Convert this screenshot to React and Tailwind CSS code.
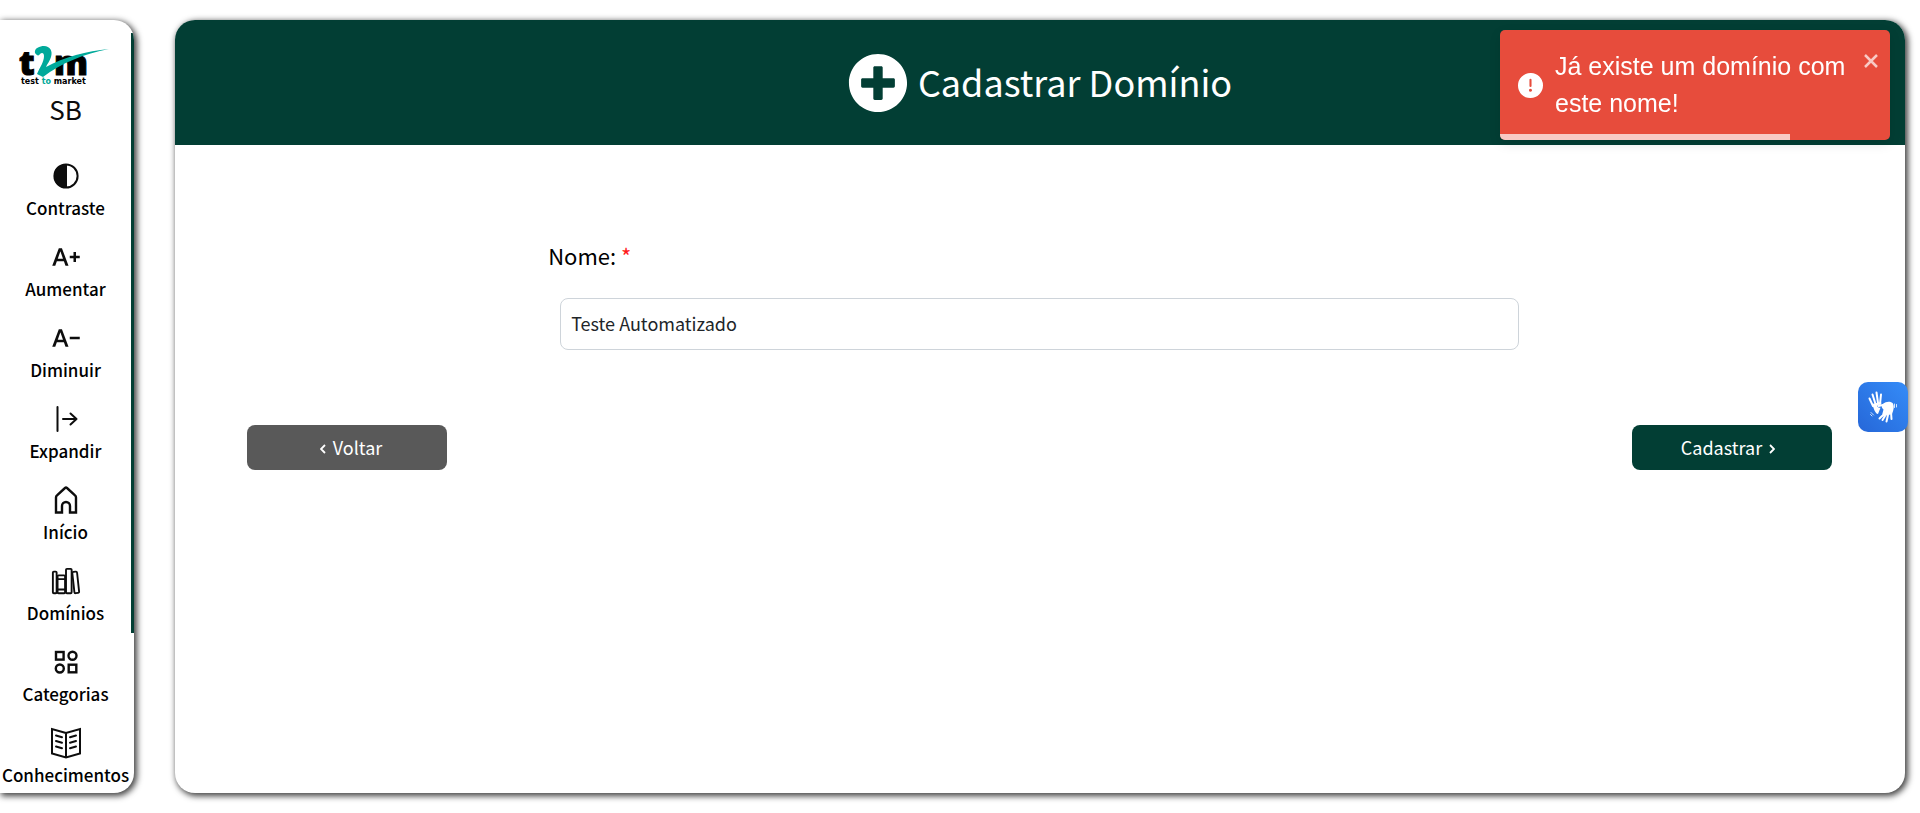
import React from "react";
import { FaPlusCircle } from "react-icons/fa";
import { MdTextIncrease, MdTextDecrease } from "react-icons/md";
import { IoLibraryOutline } from "react-icons/io5";

function Logo() {
  return (
    <svg viewBox="0 0 98 50" className="h-[50px] w-[98px] shrink-0" role="img" aria-label="t2m test to market">
      <g fontFamily="Open Sans, sans-serif" fontWeight="800" stroke="#000" strokeWidth="1">
        <text x="2" y="37" fontSize="34">t</text>
        <text x="37" y="37" fontSize="34">m</text>
      </g>
      <path
        d="M18 15 C17 10 23 8 27 8 C33 8 36 13 34 19 C33 23 30 26 29 29 C47 19 70 13 92 11 C67 16 44 25 26 39 L20 36 C23 29 27 24 27 18 C27 15 25 14 23 16 C22 18 20 18 18 15 Z"
        fill="#00a99a"
      />
      <text x="4" y="46" fontFamily="DejaVu Sans, sans-serif" fontWeight="700" fontSize="8">
        test <tspan fill="#00a99a">to</tspan> market
      </text>
    </svg>
  );
}

const line = { fill: "none", stroke: "currentColor", strokeLinecap: "round", strokeLinejoin: "round" };

function ContrastIcon() {
  return (
    <svg viewBox="0 0 28 28" className="size-7" aria-hidden="true">
      <circle cx="14" cy="14" r="11.6" fill="none" stroke="currentColor" strokeWidth="2" />
      <path d="M15 2v24h-1a12 12 0 0 1 0-24z" fill="currentColor" />
    </svg>
  );
}

function ExpandIcon() {
  return (
    <svg viewBox="0 0 28 28" className="size-7" aria-hidden="true" {...line} strokeWidth="2">
      <path d="M5.500 2v24" />
      <path d="M11 14h13.500M18.500 8.500l6 5.500-6 5.500" />
    </svg>
  );
}

function HomeIcon() {
  return (
    <svg viewBox="0 0 28 28" className="size-7" aria-hidden="true" {...line} strokeLinecap="butt" strokeLinejoin="miter" strokeWidth="2.400">
      <path d="M4 26.500V11.500C4 10.500 4.300 10 5 9.400L13 2c.6-.5 1.400-.5 2 0l8 7.400c.7.600 1 1.100 1 2.100V26.500h-6v-6.500a4 4 0 0 0-8 0v6.500z" />
    </svg>
  );
}

function CategoryIcon() {
  return (
    <svg viewBox="0 0 28 28" className="size-7" aria-hidden="true" fill="none" stroke="currentColor" strokeWidth="2.400">
      <rect x="4" y="4" width="7.600" height="7.600" />
      <circle cx="20.500" cy="7.800" r="4" />
      <circle cx="7.800" cy="20.500" r="4" />
      <rect x="16.700" y="16.700" width="7.600" height="7.600" />
    </svg>
  );
}

function BookIcon() {
  return (
    <svg viewBox="0 0 32 32" className="size-8" aria-hidden="true" {...line} strokeWidth="2">
      <path strokeLinejoin="miter" d="M16 6L2 2v24.500l14 4 14-4V2zM16 6v24" />
      <path d="M6 8.500l6 1.700M6 14l6 1.700M6 19.500l6 1.700M26 8.500l-6 1.700M26 14l-6 1.700M26 19.500l-6 1.700" />
    </svg>
  );
}

function HandsIcon() {
  return (
    <svg viewBox="0 0 50 50" className="size-full" aria-hidden="true">
      <g fill="none" stroke="#fff" strokeLinecap="round">
        <path d="M15 24L11.500 16.500M17.500 22L14.500 12.500M20 21L18.500 10.500M22 22L23 12.500" strokeWidth="2" />
        <path d="M24 34L21.500 36.500M27 34L24.500 38M30 33L28.500 39.500M33 30L33.500 37M27 22.500L20.500 24" strokeWidth="2" />
        <path d="M36.500 22v3.500M38.500 22.500v2.500M13 30.500l2.500 2.500M12.500 32.500l1.500 1.500" strokeWidth=".8" />
      </g>
      <path d="M14 22l9-2 .5 1.500-4 2c-1 1.500 1 2.500 3 2.200l-2.500 6.300c-1.500-.2-2.500-1.500-3.500-3.500z" fill="#fff" />
      <path d="M25 22c3-3 8-3 10-.5 1.500 3 .5 7-1 10.500l-10.500 3 2-7.500c-2-1.500-2.500-3.500-.5-5.500z" fill="#fff" />
    </svg>
  );
}

function Chevron({ d }) {
  return (
    <svg viewBox="0 0 6 10" className="mt-1 h-[10px] w-[6px]" aria-hidden="true" {...line} strokeLinecap="butt" strokeLinejoin="miter" strokeWidth="1.8">
      <path d={d} />
    </svg>
  );
}

const items = [
  { label: "Contraste", icon: <ContrastIcon /> },
  { label: "Aumentar", icon: <MdTextIncrease className="size-[30px]" /> },
  { label: "Diminuir", icon: <MdTextDecrease className="size-[30px]" /> },
  { label: "Expandir", icon: <ExpandIcon /> },
  { label: "Início", icon: <HomeIcon /> },
  { label: "Domínios", icon: <IoLibraryOutline className="size-[30px]" /> },
  { label: "Categorias", icon: <CategoryIcon /> },
  { label: "Conhecimentos", icon: <BookIcon /> },
];

export default function App() {
  return (
    <div className="flex h-screen gap-[41px] bg-white py-5 pr-[15px] font-[family-name:'Noto_Sans_CJK_JP',sans-serif] text-[#0d0d0d]">
      <aside className="flex w-[134px] shrink-0 overflow-hidden rounded-r-[20px] bg-white shadow-[2px_2px_6px_1px_rgba(0,0,0,0.75)]">
        <div className="flex min-w-0 flex-1 flex-col items-center pt-[18px]">
          <Logo />
          <p className="mt-[3px] mb-[33px] text-[26px] leading-9">SB</p>
          <nav className="flex flex-col gap-3">
            {items.map(({ label, icon }) => (
              <a key={label} href="#" className="flex h-[69px] flex-col items-center">
                <span className="flex h-8 items-center">{icon}</span>
                <span className="mt-[2px] text-[17px] leading-7 font-medium whitespace-nowrap text-black">{label}</span>
              </a>
            ))}
          </nav>
        </div>
        <div className="w-[3px] pt-[13px]">
          <div className="h-[79%] bg-[#023e34]" />
        </div>
      </aside>

      <main className="min-w-0 flex-1 overflow-hidden rounded-[20px] bg-white shadow-[2px_2px_6px_1px_rgba(0,0,0,0.75)]">
        <header className="flex h-[125px] items-center justify-center gap-[10px] bg-[#023e34] text-white">
          <FaPlusCircle className="size-[60px]" />
          <h1 className="pb-1 text-[36px] leading-[54px]">Cadastrar Domínio</h1>
        </header>
        <form className="pt-[93px] pr-[73px] pl-[72px]" onSubmit={(e) => e.preventDefault()}>
          <div className="mx-auto w-[62%]">
            <label htmlFor="nome" className="block text-[22px] leading-[34px] text-black">
              Nome: <span className="text-[#ff1a1a]">*</span>
            </label>
            <div className="mt-[26px] px-3">
              <input
                id="nome"
                type="text"
                defaultValue="Teste Automatizado"
                className="h-[52px] w-full rounded-lg border border-[#ced4da] px-[10px] pb-[2px] text-[18px] text-[#212529] outline-none"
              />
            </div>
          </div>
          <div className="mt-[75px] flex justify-between">
            <button type="button" className="flex h-[45px] w-[200px] items-center justify-center gap-[7px] rounded-lg bg-[#595959] pb-px pl-2 text-[18px] text-white">
              <Chevron d="M5 1L1 5l4 4" />
              Voltar
            </button>
            <button type="submit" className="flex h-[45px] w-[200px] items-center justify-center gap-[7px] rounded-lg bg-[#023e34] pr-2 pb-px text-[18px] text-white">
              Cadastrar
              <Chevron d="M1 1l4 4-4 4" />
            </button>
          </div>
        </form>
      </main>

      <button
        type="button"
        aria-label="Libras"
        className="fixed top-[382px] right-3 size-[50px] rounded-[10px] bg-linear-to-tr from-[#2667d8] to-[#358cf8]"
      >
        <HandsIcon />
      </button>

      <div
        role="alert"
        className="fixed top-[30px] right-[30px] flex h-[110px] w-[390px] overflow-hidden rounded-[5px] bg-[#e74c3c] font-[family-name:'Liberation_Sans',sans-serif] text-white shadow-[0_4px_12px_rgba(0,0,0,0.1)]"
      >
        <div className="flex flex-1 items-center gap-3 pl-[18px]">
          <svg viewBox="0 0 24 24" className="size-[25px] shrink-0" aria-hidden="true" fill="currentColor">
            <path d="M11.983 0a12.206 12.206 0 00-8.510 3.653A11.800 11.800 0 000 12.207 11.779 11.779 0 0011.800 24h.214A12.111 12.111 0 0024 11.791 11.766 11.766 0 0011.983 0zM10.500 16.542a1.476 1.476 0 011.449-1.530h.027a1.527 1.527 0 011.523 1.470 1.475 1.475 0 01-1.449 1.530h-.027a1.529 1.529 0 01-1.523-1.470zM11 12.500v-6a1 1 0 012 0v6a1 1 0 11-2 0z" />
          </svg>
          <p className="text-[25px] leading-[37px]">Já existe um domínio com este nome!</p>
        </div>
        <button type="button" aria-label="Fechar" className="mt-[21px] mr-[9px] flex size-5 items-center justify-center self-start text-white/70">
          <svg viewBox="0 0 14 14" className="size-[14px]" fill="none" stroke="currentColor" strokeWidth="2.500" aria-hidden="true">
            <path d="M1 1l12 12M13 1L1 13" />
          </svg>
        </button>
        <div className="absolute bottom-0 left-0 h-[6px] w-[290px] bg-white/70" />
      </div>
    </div>
  );
}
